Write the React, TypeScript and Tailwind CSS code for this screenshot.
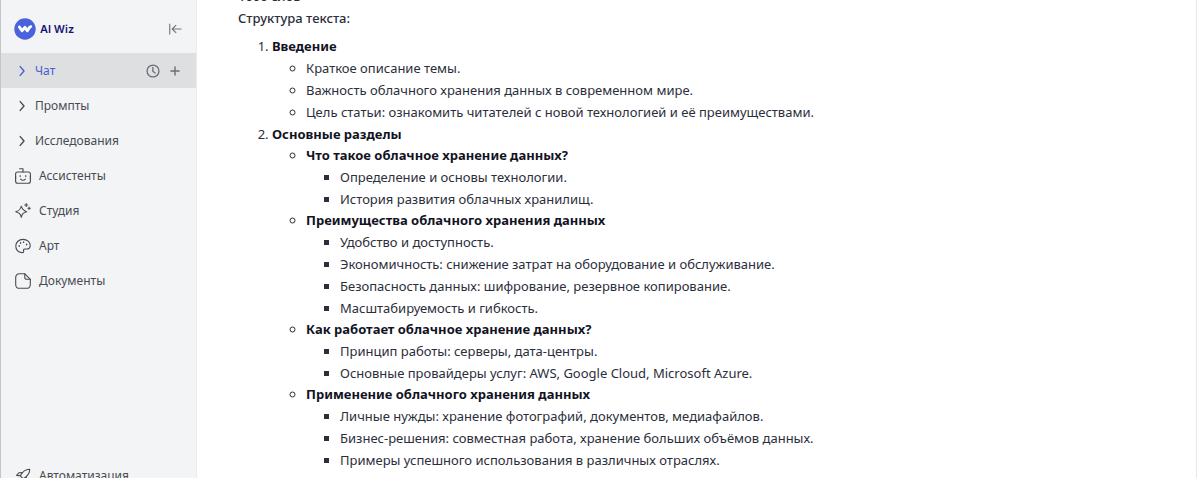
import type { ReactNode } from "react";
import { Plus } from "lucide-react";

interface Topic {
  title: string;
  items: string[];
}

const INTRO = [
  "Краткое описание темы.",
  "Важность облачного хранения данных в современном мире.",
  "Цель статьи: ознакомить читателей с новой технологией и её преимуществами.",
];

const TOPICS: Topic[] = [
  {
    title: "Что такое облачное хранение данных?",
    items: ["Определение и основы технологии.", "История развития облачных хранилищ."],
  },
  {
    title: "Преимущества облачного хранения данных",
    items: [
      "Удобство и доступность.",
      "Экономичность: снижение затрат на оборудование и обслуживание.",
      "Безопасность данных: шифрование, резервное копирование.",
      "Масштабируемость и гибкость.",
    ],
  },
  {
    title: "Как работает облачное хранение данных?",
    items: [
      "Принцип работы: серверы, дата-центры.",
      "Основные провайдеры услуг: AWS, Google Cloud, Microsoft Azure.",
    ],
  },
  {
    title: "Применение облачного хранения данных",
    items: [
      "Личные нужды: хранение фотографий, документов, медиафайлов.",
      "Бизнес-решения: совместная работа, хранение больших объёмов данных.",
      "Примеры успешного использования в различных отраслях.",
    ],
  },
];

function Icon({ children, className = "size-4" }: { children: ReactNode; className?: string }) {
  return (
    <svg
      viewBox="0 0 16 16"
      className={`shrink-0 ${className}`}
      fill="none"
      stroke="currentColor"
      strokeWidth="1.1"
      strokeLinecap="round"
      strokeLinejoin="round"
      aria-hidden="true"
    >
      {children}
    </svg>
  );
}

const Chevron = () => (
  <Icon>
    <path d="M6.2 3.6 10 8l-3.8 4.4" strokeWidth="1.4" />
  </Icon>
);

const Robot = () => (
  <Icon>
    <rect x=".6" y="4" width="14.8" height="11.2" rx="2" />
    <path d="M4.6.7H8V4M.6 8.2v2.6M15.4 8.2v2.6M5.2 7.6v1M10.8 7.6v1M5.6 11.2c1.3 1.4 3.5 1.4 4.8 0" />
  </Icon>
);

const Sparkles = () => (
  <Icon>
    <path d="M6.3 3.2c.8 3.4 1.8 4.5 5.4 5.5-3.6 1-4.6 2-5.4 5.6-.9-3.6-1.9-4.6-5.6-5.6 3.7-1 4.7-2.1 5.6-5.5Z" />
    <path d="M11.2.5v3M9.7 2h3M14.1 4v2.4M12.9 5.2h2.4" />
  </Icon>
);

const Palette = () => (
  <Icon>
    <path d="M8 1.4c4.2 0 7.2 2.6 7.2 6 0 2.3-1.3 3.6-3.4 3.6h-1.7c-1.6 0-1.8 1-1.5 2 .3 1.2-.4 1.8-1.6 1.6C3.5 14.1.8 11.5.8 7.9.8 4.2 3.9 1.4 8 1.4Z" />
    <path d="M4.2 7.8v.5M5.6 4.8v.5M8.6 3.9v.5M11.6 6.3v.5" strokeWidth="1.4" />
  </Icon>
);

const Doc = () => (
  <Icon>
    <path d="M9.8.8H4.2A3.5 3.5 0 0 0 .7 4.3v7.5a3.5 3.5 0 0 0 3.5 3.5h7.6a3.5 3.5 0 0 0 3.5-3.5V6.3L9.8.8Z" />
    <path d="M9.8.8v3.4a2.1 2.1 0 0 0 2.1 2.1h3.4" />
  </Icon>
);

const Rocket = () => (
  <Icon>
    <path d="M14.7 1.3c-4.2-.2-6.7 1.6-9.4 6.5l3 3c4.5-2.8 6.5-5.3 6.4-9.5Z" />
    <path d="M7.2 4.6 3.9 4.8 1.6 7.4l3.7.4M11.4 8.8l-.2 3.3-2.6 2.3-.3-3.6M3.8 10.2l-2.2 4.2 4.2-2.2" />
  </Icon>
);

const GROUPS = ["Промпты", "Исследования"];

const PAGES = [
  { label: "Ассистенты", icon: <Robot /> },
  { label: "Студия", icon: <Sparkles /> },
  { label: "Арт", icon: <Palette /> },
  { label: "Документы", icon: <Doc /> },
];

function PageLink({ label, icon }: { label: string; icon: ReactNode }) {
  return (
    <a href="#" className="flex h-[35px] items-center gap-2 px-3.5">
      {icon}
      {label}
    </a>
  );
}

function Sidebar() {
  return (
    <aside className="flex w-[197px] shrink-0 flex-col border-x border-l-[#c3c5c8] border-r-[#eaecef] bg-[#f3f4f6] text-[12px] text-[#484b52]">
      <div className="flex items-center justify-between pt-[18px] pr-3.5 pb-[13px] pl-[13px]">
        <a href="#" className="flex items-center gap-1 text-[11px] font-semibold text-[#1b1473] font-[Inter,sans-serif]">
          <svg viewBox="0 0 22 22" className="size-[22px]" aria-hidden="true">
            <circle cx="11" cy="11" r="10.7" fill="#4a62dc" />
            <path
              d="M5.4 9 8 12.8 10.9 9.4l2.4 3.4L15.6 9.4"
              fill="none"
              stroke="#fff"
              strokeWidth="2.9"
              strokeLinecap="round"
              strokeLinejoin="round"
            />
            <circle cx="16.9" cy="8.6" r="1.3" fill="#fff" />
          </svg>
          AI Wiz
        </a>
        <button type="button" aria-label="Свернуть меню" className="text-[#74777d]">
          <Icon className="size-3.5">
            <path d="M2 2.3v11.4M15 8H5M9 3.8 4.8 8 9 12.2" strokeWidth="1.3" />
          </Icon>
        </button>
      </div>

      <nav>
        <div className="flex h-[35px] items-center bg-[#dddfe1] pr-3.5 pl-[13px] text-[#4b5bd3]">
          <button type="button" className="flex flex-1 items-center gap-[5px]">
            <Chevron />
            Чат
          </button>
          <div className="flex items-center gap-2 text-[#6b6e74]">
            <button type="button" aria-label="История">
              <Icon className="size-3.5">
                <circle cx="8" cy="8" r="6.8" strokeWidth="1.5" />
                <path d="M7.8 4v4.3l2.7 1.9" strokeWidth="1.5" />
              </Icon>
            </button>
            <button type="button" aria-label="Новый чат">
              <Plus size={14} strokeWidth={2.4} />
            </button>
          </div>
        </div>
        {GROUPS.map((label) => (
          <button key={label} type="button" className="flex h-[35px] w-full items-center gap-[5px] px-[13px]">
            <Chevron />
            {label}
          </button>
        ))}
        {PAGES.map((page) => (
          <PageLink key={page.label} {...page} />
        ))}
      </nav>

      <nav className="mt-40">
        <PageLink label="Автоматизация" icon={<Rocket />} />
      </nav>
    </aside>
  );
}

export default function App() {
  return (
    <div className="flex h-screen overflow-hidden bg-white font-['Noto_Sans',sans-serif]">
      <Sidebar />
      <main className="mr-[3px] min-w-0 flex-1 border-r border-[#e3e8ea] pl-[41px] text-[13px] leading-[22px] text-[#2b2e3b]">
        {/* scrolled: the first line is mostly out of view */}
        <div className="-mt-[15px] font-medium">
          <p>1000 слов</p>
          <p>Структура текста:</p>
        </div>
        <ol className="mt-1.5 list-decimal pl-[34px]">
          <li>
            <h3 className="font-bold text-[#12131f]">Введение</h3>
            <ul className="list-[circle] pl-[34px]">
              {INTRO.map((line) => (
                <li key={line}>{line}</li>
              ))}
            </ul>
          </li>
          <li>
            <h3 className="font-bold text-[#12131f]">Основные разделы</h3>
            <ul className="list-[circle] pl-[34px] leading-[21px]">
              {TOPICS.map((topic) => (
                <li key={topic.title}>
                  <h4 className="font-bold text-[#12131f]">{topic.title}</h4>
                  <ul className="list-[square] pl-[34px] leading-[22px]">
                    {topic.items.map((line) => (
                      <li key={line}>{line}</li>
                    ))}
                  </ul>
                </li>
              ))}
            </ul>
          </li>
        </ol>
      </main>
    </div>
  );
}
